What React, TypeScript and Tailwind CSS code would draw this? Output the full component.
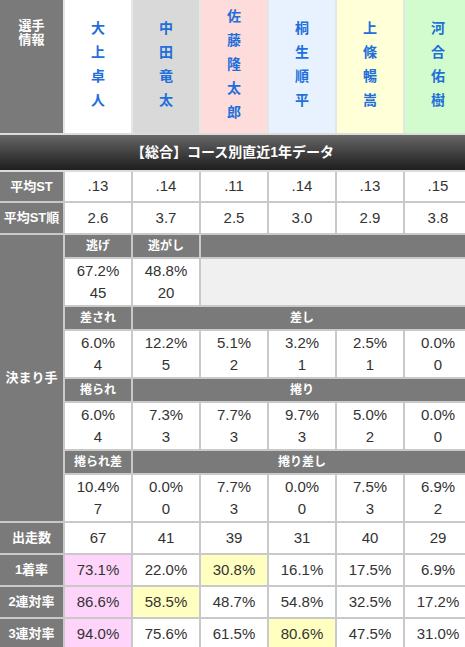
import React from 'react';

type Racer = { name: string; bg: string };

const racers: Racer[] = [
  { name: '大上卓人', bg: 'bg-white' },
  { name: '中田竜太', bg: 'bg-[#d9d9d9]' },
  { name: '佐藤隆太郎', bg: 'bg-[#ffdcdc]' },
  { name: '桐生順平', bg: 'bg-[#e8f2ff]' },
  { name: '上條暢嵩', bg: 'bg-[#ffffd8]' },
  { name: '河合佑樹', bg: 'bg-[#d2fccd]' },
];

const avgSt = ['.13', '.14', '.11', '.14', '.13', '.15'];
const avgStRank = ['2.6', '3.7', '2.5', '3.0', '2.9', '3.8'];

const sashi = [['6.0%', '4'], ['12.2%', '5'], ['5.1%', '2'], ['3.2%', '1'], ['2.5%', '1'], ['0.0%', '0']];
const makuri = [['6.0%', '4'], ['7.3%', '3'], ['7.7%', '3'], ['9.7%', '3'], ['5.0%', '2'], ['0.0%', '0']];
const makuriSashi = [['10.4%', '7'], ['0.0%', '0'], ['7.7%', '3'], ['0.0%', '0'], ['7.5%', '3'], ['6.9%', '2']];

const PINK = 'bg-[#ffd4fb]';
const YELLOW = 'bg-[#ffffc0]';

const stats: { label: string; values: string[]; hl?: Record<number, string> }[] = [
  { label: '出走数', values: ['67', '41', '39', '31', '40', '29'] },
  { label: '1着率', values: ['73.1%', '22.0%', '30.8%', '16.1%', '17.5%', '6.9%'], hl: { 0: PINK, 2: YELLOW } },
  { label: '2連対率', values: ['86.6%', '58.5%', '48.7%', '54.8%', '32.5%', '17.2%'], hl: { 0: PINK, 1: YELLOW } },
  { label: '3連対率', values: ['94.0%', '75.6%', '61.5%', '80.6%', '47.5%', '31.0%'], hl: { 0: PINK, 3: YELLOW } },
];

const Label = ({ children, className = '' }: { children: React.ReactNode; className?: string }) => (
  <div className={`flex items-center justify-center bg-[#7a7a7a] text-[13px] font-bold text-white ${className}`}>
    {children}
  </div>
);

const SubHead = ({ children, className = '' }: { children?: React.ReactNode; className?: string }) => (
  <div className={`flex items-center justify-center bg-[#7a7a7a] text-[12px] font-bold text-white ${className}`}>
    {children}
  </div>
);

const Val = ({ children, className = 'bg-white' }: { children: React.ReactNode; className?: string }) => (
  <div className={`flex items-center justify-center text-[15px] text-[#333] ${className}`}>{children}</div>
);

const Pair = ({ v }: { v: string[] }) => (
  <div className="flex flex-col items-center justify-center bg-white text-[15px] leading-[22px] text-[#333]">
    <span>{v[0]}</span>
    <span>{v[1]}</span>
  </div>
);

export default function App() {
  return (
    <div className="h-[647px] w-[465px] overflow-hidden bg-white font-['Liberation_Sans','Noto_Sans_CJK_JP',sans-serif]">
      <div className="flex w-[473px] flex-col gap-[2px] bg-[#dcdcdc]">
        {/* racer header */}
        <div className="grid h-[133px] grid-cols-[63px_repeat(6,66px)] gap-[2px] bg-[#e6e6e6]">
          <div className="flex justify-center bg-[#7a7a7a] pt-[19px] text-[13px] font-bold leading-[14px] text-white">
            <span className="text-center">
              選手
              <br />
              情報
            </span>
          </div>
          {racers.map((r) => (
            <div key={r.name} className={`flex flex-col items-center justify-center ${r.bg} pb-[6px] text-[14px] font-bold leading-[24px] text-[#1e6fd9]`}>
              {r.name.split('').map((c, i) => (
                <span key={i}>{c}</span>
              ))}
            </div>
          ))}
        </div>

        {/* title bar */}
        <div className="flex h-[35px] w-[465px] items-center justify-center bg-linear-to-b from-[#676767] to-[#1f1f1f] text-[14px] font-bold text-white">
          【総合】コース別直近1年データ
        </div>

        {/* body */}
        <div className="grid grid-cols-[63px_repeat(6,66px)] grid-rows-[29px_30px_22px_46px_22px_46px_22px_46px_22px_46px_30px_30px_30px_30px] gap-[2px] bg-[#c9c9c9]">
          <Label>平均ST</Label>
          {avgSt.map((v, i) => (
            <Val key={i}>{v}</Val>
          ))}
          <Label>平均ST順</Label>
          {avgStRank.map((v, i) => (
            <Val key={i}>{v}</Val>
          ))}

          <Label className="row-span-8">決まり手</Label>
          <SubHead>逃げ</SubHead>
          <SubHead>逃がし</SubHead>
          <SubHead className="col-span-4" />
          <Pair v={['67.2%', '45']} />
          <Pair v={['48.8%', '20']} />
          <div className="col-span-4 bg-[#f0f0f0]" />

          <SubHead>差され</SubHead>
          <SubHead className="col-span-5">差し</SubHead>
          {sashi.map((v, i) => (
            <Pair key={i} v={v} />
          ))}

          <SubHead>捲られ</SubHead>
          <SubHead className="col-span-5">捲り</SubHead>
          {makuri.map((v, i) => (
            <Pair key={i} v={v} />
          ))}

          <SubHead>捲られ差</SubHead>
          <SubHead className="col-span-5">捲り差し</SubHead>
          {makuriSashi.map((v, i) => (
            <Pair key={i} v={v} />
          ))}

          {stats.map((s) => (
            <React.Fragment key={s.label}>
              <Label>{s.label}</Label>
              {s.values.map((v, i) => (
                <Val key={i} className={s.hl?.[i] ?? 'bg-white'}>
                  {v}
                </Val>
              ))}
            </React.Fragment>
          ))}
        </div>
      </div>
    </div>
  );
}
